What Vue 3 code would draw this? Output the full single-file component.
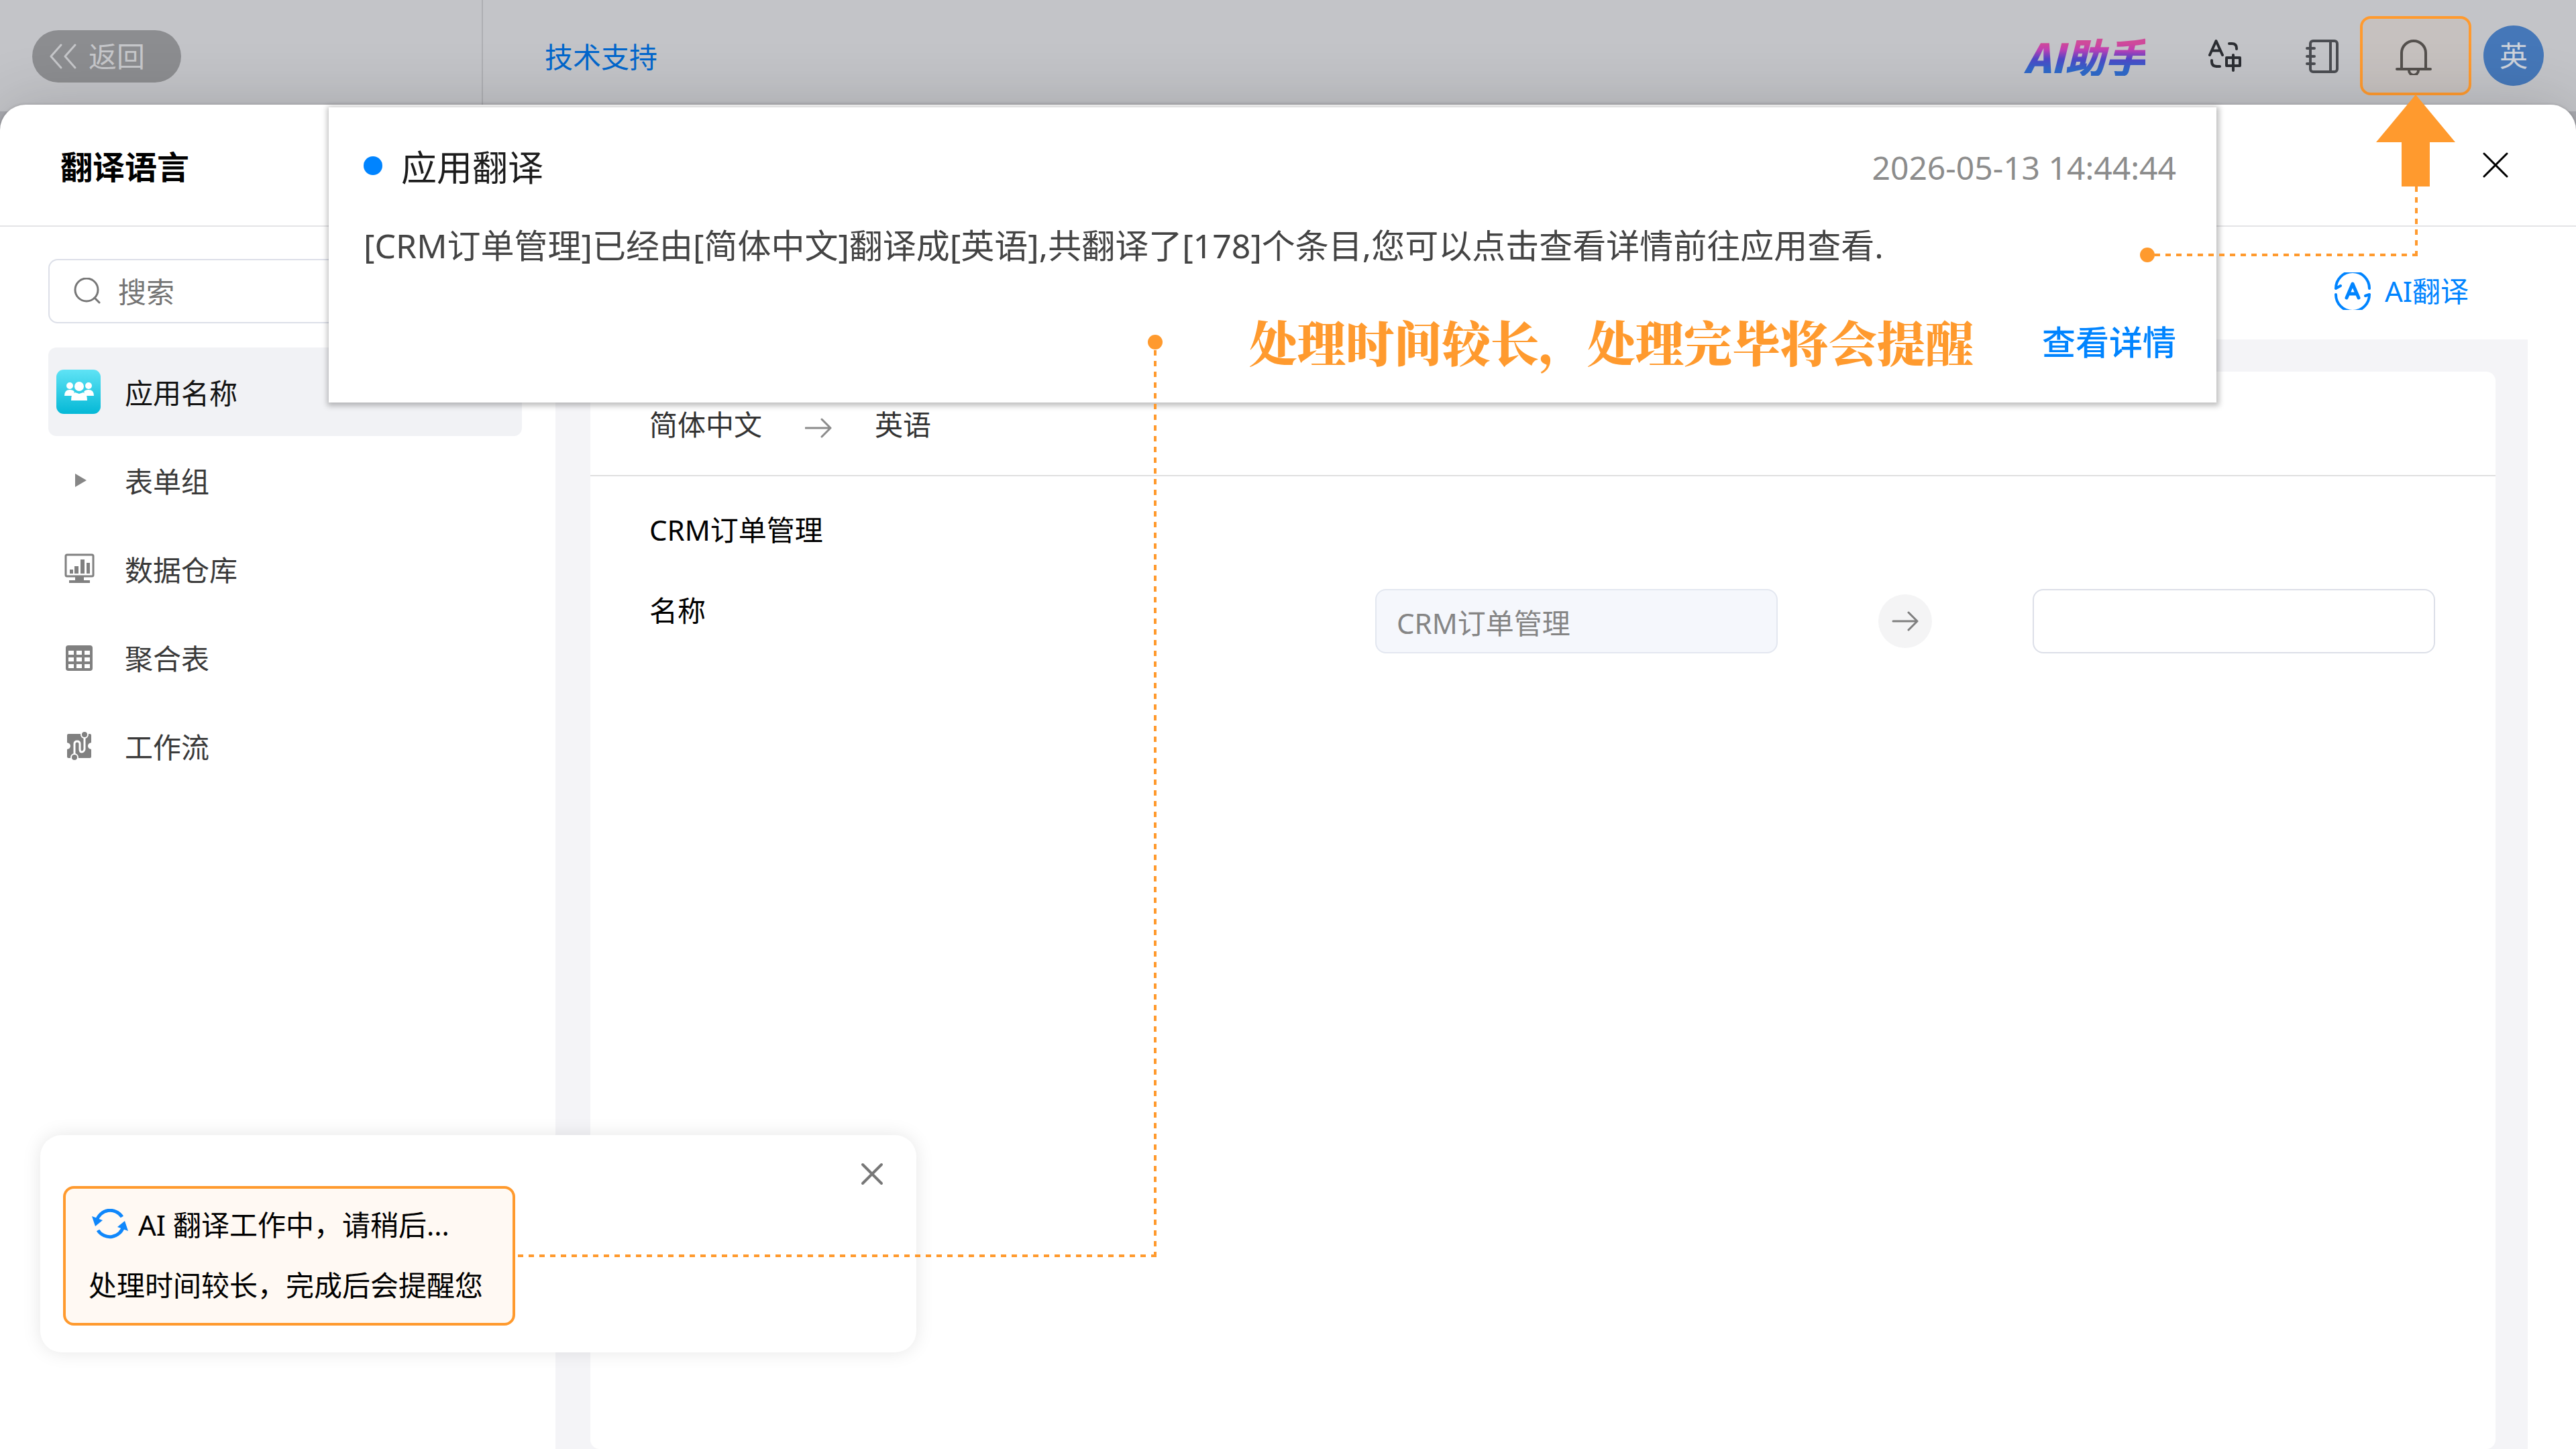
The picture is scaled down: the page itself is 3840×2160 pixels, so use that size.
<script setup>
import { ref } from 'vue'

const keyword = ref('')
const source = ref('CRM订单管理')
const target = ref('')
const active = ref('app')

const items = [
  { id: 'app', label: '应用名称' },
  { id: 'form', label: '表单组' },
  { id: 'data', label: '数据仓库' },
  { id: 'table', label: '聚合表' },
  { id: 'flow', label: '工作流' }
]
</script>

<template>
  <div class="page">
    <header class="topbar">
      <div class="topbar-left">
        <button class="back" type="button">
          <svg width="40" height="40" viewBox="0 0 40 40" fill="none" stroke="currentColor" stroke-width="3" stroke-linecap="round" stroke-linejoin="round">
            <path d="M17 3 2 20l15 17M38 3 23 20l15 17" />
          </svg>
          <span>返回</span>
        </button>
      </div>
      <a class="support" href="#">技术支持</a>
      <div class="tools">
        <button class="assistant" type="button">AI助手</button>
        <button class="tool" type="button" aria-label="切换语言">
          <svg width="50" height="50" viewBox="0 0 50 50" fill="none" stroke="#2c2e33" stroke-width="4" stroke-linecap="round" stroke-linejoin="round">
            <path d="M3 24 12.500 3 22 24M6.500 17.500h12" />
            <path d="M32 7h4q7 0 7 7v1M6 32v2q0 7 8 7h4" />
            <path d="M28 28h20v12H28zM38 24v23" />
          </svg>
        </button>
        <button class="tool" type="button" aria-label="通讯录">
          <svg width="50" height="54" viewBox="0 -2 50 54" fill="none" stroke="#4a4c51" stroke-width="4" stroke-linecap="round" stroke-linejoin="round">
            <rect x="7" y="3" width="40" height="46" rx="4" />
            <path d="M37 3v46M2 14h11M2 26h11M2 37h11" />
          </svg>
        </button>
        <button class="tool bell" type="button" aria-label="通知">
          <svg width="60" height="58" viewBox="1 -3 60 58" fill="none" stroke="#54504d" stroke-width="4" stroke-linecap="round">
            <path d="M10 46V22a18 18 0 0 1 36 0v24M3 46h50" />
            <path d="M21 48a7 7 0 0 0 14 0" />
          </svg>
        </button>
        <button class="avatar" type="button">英</button>
      </div>
    </header>

    <section class="panel">
      <div class="panel-head">
        <h1>翻译语言</h1>
        <button class="close" type="button" aria-label="关闭">
          <svg width="40" height="44" viewBox="0 0 40 44" fill="none" stroke="#000" stroke-width="3" stroke-linecap="round">
            <path d="M3 2l34 34M37 2 3 36" />
          </svg>
        </button>
      </div>

      <div class="panel-body">
        <aside class="sidebar">
          <label class="search">
            <svg width="40" height="40" viewBox="0 0 40 40" fill="none" stroke="#777" stroke-width="3" stroke-linecap="round">
              <circle cx="19" cy="18" r="17" />
              <path d="M31 30l7 7" />
            </svg>
            <input v-model="keyword" type="text" placeholder="搜索" aria-label="搜索" />
          </label>
          <nav class="nav">
            <button
              v-for="item in items"
              :key="item.id"
              type="button"
              class="nav-item"
              :class="{ active: active === item.id }"
              @click="active = item.id"
            >
              <span class="nav-icon">
                <svg v-if="item.id === 'app'" width="66" height="66" viewBox="0 0 66 66">
                  <defs>
                    <linearGradient id="tile" x1="0" y1="0" x2="0" y2="1">
                      <stop offset="0" stop-color="#5fe3f5" />
                      <stop offset="1" stop-color="#04b8d6" />
                    </linearGradient>
                  </defs>
                  <rect width="66" height="66" rx="11" fill="url(#tile)" />
                  <g fill="#fff">
                    <circle cx="20" cy="24" r="5" />
                    <circle cx="48" cy="24" r="5" />
                    <circle cx="34" cy="25" r="7" />
                    <path d="M12 39q0-9 8-9 5 0 7 3l-3 6zM56 39q0-9-8-9-5 0-7 3l3 6z" />
                    <path d="M22 46q0-11 6-12l6 2 6-2q6 1 6 12z" />
                  </g>
                </svg>
                <svg v-else-if="item.id === 'form'" width="26" height="28" viewBox="-6 0 26 28">
                  <path d="M2 4l17 10L2 24z" fill="#868686" />
                </svg>
                <svg v-else-if="item.id === 'data'" width="48" height="48" viewBox="-1 0 48 48">
                  <rect x="4" y="3" width="41" height="32" rx="2" fill="none" stroke="#808080" stroke-width="3" />
                  <path d="M10 25h5v6h-5zM17 20h6v11h-6zM26 10h6v21h-6zM35 15h5v16h-5zM18 36h13v5h9v4H9v-4h9z" fill="#808080" />
                </svg>
                <svg v-else-if="item.id === 'table'" width="42" height="40" viewBox="-2 -1 42 40">
                  <rect y="1" width="40" height="38" rx="4" fill="#808080" />
                  <path
                    d="M4 9h8v6H4zM16 9h8v6h-8zM28 9h8v6h-8zM4 19h8v6H4zM16 19h8v6h-8zM28 19h8v6h-8zM4 29h8v6H4zM16 29h8v6h-8zM28 29h8v6h-8z"
                    fill="#fff"
                  />
                </svg>
                <svg v-else width="42" height="46" viewBox="-2 0 42 46">
                  <path d="M4 5h32q2 0 2 2v11q-5 1-5 5t5 5v11q0 2-2 2H4q-2 0-2-2V28q5-1 5-5t-5-5V7q0-2 2-2z" fill="#808080" />
                  <path d="M13 40V20q0-4 4-4t4 4v8q0 4 3 4t4-4V6" fill="none" stroke="#fff" stroke-width="3" />
                  <circle cx="13" cy="40" r="5" fill="#808080" stroke="#fff" stroke-width="2" />
                  <circle cx="28" cy="6" r="5" fill="#808080" stroke="#fff" stroke-width="2" />
                </svg>
              </span>
              <span class="nav-label">{{ item.label }}</span>
            </button>
          </nav>
        </aside>

        <main class="main">
          <div class="toolbar">
            <button class="ai" type="button">
              <svg width="56" height="56" viewBox="0 0 56 56" fill="none" stroke="currentColor" stroke-width="4" stroke-linecap="round" stroke-linejoin="round">
                <path d="M3 24a25 25 0 0 1 50 0M3 24l7-4M53 33a25 25 0 0 1-50 0M53 33l-6 2" />
                <path d="M19 38l9-21 9 21M22 32h12" stroke-width="5" />
              </svg>
              <span>AI翻译</span>
            </button>
          </div>
          <div class="canvas">
            <div class="card">
              <div class="langs">
                <span>简体中文</span>
                <svg width="40" height="40" viewBox="0 0 40 40" fill="none" stroke="#8c8c8c" stroke-width="3" stroke-linecap="round" stroke-linejoin="round">
                  <path d="M1 25h37M25 12l13 13-13 13" />
                </svg>
                <span>英语</span>
              </div>
              <div class="fields">
                <h2>CRM订单管理</h2>
                <div class="row">
                  <label class="name" for="target">名称</label>
                  <input v-model="source" class="field" type="text" disabled aria-label="原文" />
                  <span class="to">
                    <svg width="40" height="30" viewBox="0 0 40 30" fill="none" stroke="#808080" stroke-width="3" stroke-linecap="round" stroke-linejoin="round">
                      <path d="M2 15h36M25 2l13 13-13 13" />
                    </svg>
                  </span>
                  <input id="target" v-model="target" class="field" type="text" />
                </div>
              </div>
            </div>
          </div>
        </main>
      </div>
    </section>

    <article class="notice">
      <div class="notice-head">
        <i class="unread"></i>
        <h3>应用翻译</h3>
        <time datetime="2026-05-13T14:44:44">2026-05-13 14:44:44</time>
      </div>
      <p>[CRM订单管理]已经由[简体中文]翻译成[英语],共翻译了[178]个条目,您可以点击查看详情前往应用查看.</p>
      <div class="notice-foot">
        <strong>处理时间较长，处理完毕将会提醒</strong>
        <a href="#">查看详情</a>
      </div>
    </article>

    <div class="toast" role="status">
      <button class="toast-close" type="button" aria-label="关闭提示">
        <svg width="34" height="34" viewBox="0 0 34 34" fill="none" stroke="#777" stroke-width="4" stroke-linecap="round">
          <path d="M3 3l28 28M31 3 3 31" />
        </svg>
      </button>
      <div class="toast-box">
        <div class="toast-line">
          <svg width="60" height="48" viewBox="-4 2 60 48">
            <path d="M8 20a21 21 0 0 1 38-6M48 28a21 21 0 0 1-38 6" fill="none" stroke="#0f87fb" stroke-width="5" />
            <path d="M1 13l5 15 11-9zM55 35l-5-15-11 9z" fill="#0f87fb" />
          </svg>
          <span>AI 翻译工作中，请稍后...</span>
        </div>
        <div class="toast-line">处理时间较长，完成后会提醒您</div>
      </div>
    </div>

    <svg class="arrow" width="118" height="137" viewBox="0 0 118 137">
      <path d="M59 0l59 71H80v66H38V71H0z" fill="#ff9a2e" />
    </svg>
    <div class="link link-bell"></div>
    <div class="link link-toast"></div>
  </div>
</template>

<style>
body {
  margin: 0;
}
</style>

<style scoped>
.page {
  position: relative;
  display: flex;
  flex-direction: column;
  min-height: 100vh;
  overflow: hidden;
  background: #a9aab0;
  font-family: "Noto Sans", "Noto Sans CJK SC", sans-serif;
  font-size: 42px;
  line-height: 60px;
  color: #000;
}
.page * {
  box-sizing: border-box;
}
button {
  padding: 0;
  border: 0;
  background: none;
  font: inherit;
  color: inherit;
  cursor: pointer;
}
h1,
h2,
h3,
p {
  margin: 0;
  font-weight: 400;
}
a {
  text-decoration: none;
}
svg {
  display: block;
  flex: none;
}

.topbar {
  display: flex;
  align-items: center;
  height: 166px;
  padding-right: 48px;
  background: #c3c4c8;
}
.topbar-left {
  display: flex;
  align-items: center;
  width: 720px;
  height: 100%;
  padding: 2px 0 0 48px;
  border-right: 2px solid #aeafb3;
}
.back {
  display: flex;
  align-items: center;
  gap: 18px;
  width: 222px;
  height: 78px;
  padding-left: 26px;
  border-radius: 40px;
  background: #8c8d90;
  color: #c6c7ca;
}
.support {
  padding-top: 4px;
  margin-left: 92px;
  color: #0066cc;
}
.tools {
  display: flex;
  align-items: center;
  margin-left: auto;
}
.assistant {
  margin-right: 78px;
  font-family: "Noto Sans CJK SC", sans-serif;
  font-size: 60px;
  font-weight: 900;
  font-style: italic;
  background: linear-gradient(#cf4a9a 20%, #c040b4 35%, #5046c8 58%, #2f68c8 85%);
  background-clip: text;
  -webkit-background-clip: text;
  color: transparent;
}
.tool {
  display: flex;
  align-items: center;
  justify-content: center;
  width: 80px;
  height: 80px;
  margin-right: 66px;
}
.tool + .tool {
  margin-right: 16px;
}
.tool.bell {
  width: 166px;
  height: 118px;
  margin-right: 18px;
  border: 4px solid #ff9a2e;
  border-radius: 16px;
  background: rgba(255, 154, 46, 0.06);
}
.avatar {
  width: 90px;
  height: 90px;
  border-radius: 50%;
  background: #4577b8;
  color: #ced3db;
}

.panel {
  position: relative;
  display: flex;
  flex: 1;
  flex-direction: column;
  margin-top: -10px;
  border-radius: 38px 38px 0 0;
  background: #fff;
  box-shadow: 0 0 96px rgba(0, 0, 0, 0.16), 0 0 4px rgba(0, 0, 0, 0.2);
}
.panel-head {
  display: flex;
  align-items: center;
  justify-content: space-between;
  height: 182px;
  padding: 6px 100px 0 90px;
  border-bottom: 2px solid #e4e4e6;
}
.panel-head h1 {
  font-size: 48px;
  font-weight: 700;
}
.panel-body {
  display: flex;
  flex: 1;
}
.sidebar {
  flex: none;
  width: 828px;
  padding: 48px 50px 0 72px;
}
.search {
  display: flex;
  align-items: center;
  gap: 26px;
  height: 96px;
  padding: 0 36px;
  border: 2px solid #dcdfe8;
  border-radius: 14px;
}
.search input {
  flex: 1;
  min-width: 0;
  padding: 2px 0 0;
  border: 0;
  outline: 0;
  background: none;
  font: inherit;
}
.search input::placeholder {
  color: #757575;
  opacity: 1;
}
.nav {
  display: flex;
  flex-direction: column;
  margin-top: 36px;
}
.nav-item {
  display: flex;
  align-items: center;
  gap: 36px;
  height: 132px;
  padding-left: 12px;
  border-radius: 12px;
  color: #3a3a3a;
  text-align: left;
}
.nav-item.active {
  background: #f1f2f5;
  color: #141414;
}
.nav-icon {
  display: flex;
  justify-content: center;
  width: 66px;
}
.nav-label {
  padding-top: 4px;
}

.main {
  display: flex;
  flex: 1;
  flex-direction: column;
  min-width: 0;
  padding-right: 72px;
}
.toolbar {
  display: flex;
  align-items: center;
  justify-content: flex-end;
  height: 168px;
  padding: 24px 88px 0 0;
}
.ai {
  display: flex;
  align-items: center;
  gap: 20px;
  color: #0084ff;
}
.canvas {
  display: flex;
  flex: 1;
  padding: 48px 48px 0 52px;
  background: #f4f4f7;
}
.card {
  flex: 1;
  min-width: 0;
  border-radius: 14px;
  background: #fff;
}
.langs {
  display: flex;
  align-items: center;
  gap: 64px;
  height: 156px;
  padding: 4px 88px 0;
  border-bottom: 2px solid #dfdfe0;
  color: #333;
}
.fields {
  padding: 50px 90px 50px 88px;
}
.fields h2 {
  font-size: 42px;
}
.row {
  display: flex;
  align-items: flex-start;
  margin-top: 58px;
}
.name {
  flex: 1;
  line-height: 64px;
}
.field {
  width: 600px;
  height: 96px;
  padding: 0 30px;
  border: 2px solid #dcdfe8;
  border-radius: 16px;
  background: #fff;
  font: inherit;
  color: #333;
}
.field:disabled {
  border-color: #e3e7f0;
  background: #f5f7fc;
  color: #858585;
}
.to {
  display: flex;
  align-items: center;
  justify-content: center;
  width: 80px;
  height: 80px;
  margin: 8px 150px;
  border-radius: 50%;
  background: #f4f4f5;
}

.notice {
  position: absolute;
  top: 160px;
  left: 490px;
  right: 536px;
  padding: 50px 60px 40px 52px;
  background: #fff;
  box-shadow: 1px 2px 8px 3px rgba(0, 0, 0, 0.26);
}
.notice-head {
  display: flex;
  align-items: center;
  gap: 28px;
  line-height: 80px;
}
.unread {
  width: 28px;
  height: 28px;
  margin-bottom: 6px;
  border-radius: 50%;
  background: #0084ff;
}
.notice-head h3 {
  font-size: 53px;
  color: #1c1c1c;
}
.notice-head time {
  margin-left: auto;
  font-size: 48px;
  color: #8c8c8c;
}
.notice p {
  margin-top: 36px;
  font-size: 50px;
  line-height: 80px;
  color: #444;
  white-space: nowrap;
}
.notice-foot {
  display: flex;
  align-items: center;
  justify-content: flex-end;
  gap: 102px;
  margin-top: 54px;
  line-height: 100px;
}
.notice-foot strong {
  line-height: 96px;
  padding-bottom: 4px;
  font-family: "Noto Serif CJK SC", "Source Han Serif SC", "Noto Sans CJK SC", serif;
  font-size: 72px;
  font-weight: 900;
  color: #ff9a2e;
}
.notice-foot a {
  font-size: 50px;
  font-weight: 500;
  color: #0084ff;
}

.toast {
  position: absolute;
  left: 60px;
  bottom: 144px;
  width: 1306px;
  padding: 76px 34px 40px;
  border-radius: 32px;
  background: #fff;
  box-shadow: 0 0 28px rgba(0, 0, 0, 0.1);
}
.toast-close {
  position: absolute;
  top: 41px;
  right: 49px;
}
.toast-box {
  display: flex;
  flex-direction: column;
  gap: 30px;
  width: 674px;
  height: 208px;
  padding: 24px 0 0 34px;
  border: 4px solid #ff9a2e;
  border-radius: 16px;
  background: #fff9f3;
}
.toast-line {
  display: flex;
  align-items: center;
  gap: 14px;
  white-space: nowrap;
}

.arrow {
  position: absolute;
  top: 141px;
  right: 180px;
}
.link {
  position: absolute;
  background:
    repeating-linear-gradient(0deg, #ff9a2e 0 8px, transparent 8px 16px) right top / 4px 100% no-repeat,
    repeating-linear-gradient(270deg, #ff9a2e 0 8px, transparent 8px 16px) left bottom / 100% 4px no-repeat;
  pointer-events: none;
}
.link::before {
  content: "";
  position: absolute;
  width: 22px;
  height: 22px;
  border-radius: 50%;
  background: #ff9a2e;
}
.link-bell {
  top: 278px;
  right: 236px;
  width: 394px;
  height: 104px;
}
.link-bell::before {
  left: -20px;
  bottom: -9px;
}
.link-toast {
  top: 520px;
  left: 768px;
  width: 956px;
  height: 1354px;
}
.link-toast::before {
  top: -21px;
  right: -9px;
}
</style>
